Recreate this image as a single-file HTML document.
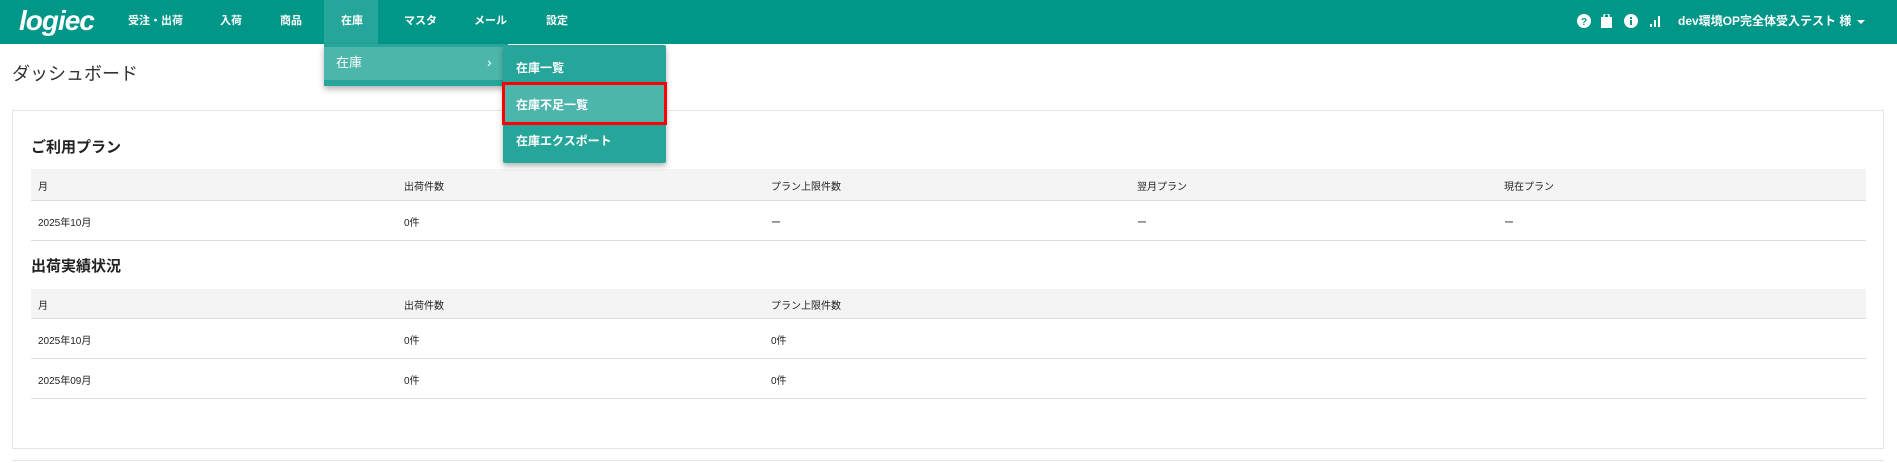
<!DOCTYPE html>
<html><head><meta charset="utf-8"><style>
*{margin:0;padding:0;box-sizing:border-box}
body{width:1897px;height:463px;overflow:hidden;background:#fff;font-family:"Liberation Sans","Noto Sans CJK JP",sans-serif;color:#222;position:relative}
.hdr{position:absolute;left:0;top:0;width:1897px;height:44px;background:#009688}
.nav{position:absolute;top:1px;height:44px;line-height:40px;color:#fff;font-size:11px;font-weight:bold}
.logo{position:absolute;left:19px;top:6px;color:#fff;font-size:28px;font-weight:bold;font-style:italic;letter-spacing:-1px;line-height:30px}
.abs{position:absolute}
.dd1{left:324px;top:44px;width:184px;height:42px;background:#26a69a;box-shadow:0 3px 6px rgba(0,0,0,.3)}
.dd1 .it{position:absolute;left:0;top:3px;width:184px;height:33px;background:#4db6ac;color:#fff;font-size:13px;line-height:31px;padding-left:12px}
.dd2{left:503px;top:45px;width:163px;height:118px;background:#26a69a;box-shadow:0 3px 6px rgba(0,0,0,.3);border-radius:2px}
.dd2 div{position:absolute;left:13px;color:#fff;font-size:12px;font-weight:bold}
.card{left:12px;top:110px;width:1872px;height:339px;border:1px solid #e6e6e6}
.h2{position:absolute;font-size:15px;font-weight:bold;color:#222}
.th{position:absolute;left:31px;width:1835px;background:#f4f4f4;border-bottom:1px solid #ddd}
.tr{position:absolute;left:31px;width:1835px;border-bottom:1px solid #ddd}
.c{position:absolute;font-size:10px;color:#222}
</style></head><body>
<div class="hdr">
<div class="logo">logiec</div>
<div class="abs" style="left:324px;top:0;width:54px;height:44px;background:#26a69a"></div>
<div class="nav" style="left:128px">受注・出荷</div>
<div class="nav" style="left:220px">入荷</div>
<div class="nav" style="left:280px">商品</div>
<div class="nav" style="left:341px">在庫</div>
<div class="nav" style="left:404px">マスタ</div>
<div class="nav" style="left:474px">メール</div>
<div class="nav" style="left:546px">設定</div>
<svg class="abs" style="left:1577px;top:14px" width="100" height="16" viewBox="0 0 100 16">
<circle cx="7" cy="7" r="7" fill="#fff"/><text x="7" y="11" font-size="10" font-weight="bold" text-anchor="middle" fill="#009688" font-family="Liberation Sans">?</text>
<rect x="24" y="3" width="11" height="11" fill="#fff"/><path d="M27 4 V2 a2.5 2.5 0 0 1 5 0 V4" stroke="#fff" fill="none" stroke-width="1.5"/>
<circle cx="54" cy="7" r="7" fill="#fff"/><rect x="53" y="6" width="2" height="5" fill="#009688"/><rect x="53" y="3" width="2" height="2" fill="#009688"/>
<rect x="73" y="10" width="2" height="3" fill="#fff"/><rect x="77" y="6" width="2" height="7" fill="#fff"/><rect x="81" y="2" width="2" height="11" fill="#fff"/>
</svg>
<div class="nav" style="left:1678px;top:1px;font-size:12px">dev環境OP完全体受入テスト 様</div>
<div class="abs" style="left:1857px;top:20px;border-left:4px solid transparent;border-right:4px solid transparent;border-top:4px solid #fff"></div>
</div>
<div class="abs" style="left:12px;top:60px;font-size:18px;color:#333">ダッシュボード</div>
<div class="abs card"></div>
<div class="h2" style="left:31px;top:136px">ご利用プラン</div>
<div class="th" style="top:169px;height:32px"></div>
<div class="tr" style="top:201px;height:40px"></div>
<div class="c" style="left:38px;top:178px">月</div><div class="c" style="left:404px;top:178px">出荷件数</div><div class="c" style="left:771px;top:178px">プラン上限件数</div><div class="c" style="left:1137px;top:178px">翌月プラン</div><div class="c" style="left:1504px;top:178px">現在プラン</div>
<div class="c" style="left:38px;top:214px">2025年10月</div><div class="c" style="left:404px;top:214px">0件</div><div class="c" style="left:771px;top:214px">ー</div><div class="c" style="left:1137px;top:214px">ー</div><div class="c" style="left:1504px;top:214px">ー</div>
<div class="h2" style="left:31px;top:255px">出荷実績状況</div>
<div class="th" style="top:289px;height:30px"></div>
<div class="tr" style="top:319px;height:40px"></div>
<div class="tr" style="top:359px;height:40px"></div>
<div class="c" style="left:38px;top:297px">月</div><div class="c" style="left:404px;top:297px">出荷件数</div><div class="c" style="left:771px;top:297px">プラン上限件数</div>
<div class="c" style="left:38px;top:332px">2025年10月</div><div class="c" style="left:404px;top:332px">0件</div><div class="c" style="left:771px;top:332px">0件</div>
<div class="c" style="left:38px;top:372px">2025年09月</div><div class="c" style="left:404px;top:372px">0件</div><div class="c" style="left:771px;top:372px">0件</div>
<div class="abs" style="left:12px;top:460px;width:1872px;height:3px;border-top:1px solid #e6e6e6"></div>
<div class="abs dd1"><div class="it">在庫<span style="position:absolute;left:163px;font-size:14px">›</span></div></div>
<div class="abs dd2">
<div style="top:14px">在庫一覧</div>
<div style="top:87px">在庫エクスポート</div>
</div>
<div class="abs" style="left:502px;top:82px;width:165px;height:43px;background:#4db6ac;border:3px solid #f00"><span style="position:absolute;left:11px;top:11px;color:#fff;font-size:12px;font-weight:bold">在庫不足一覧</span></div>
</body></html>
